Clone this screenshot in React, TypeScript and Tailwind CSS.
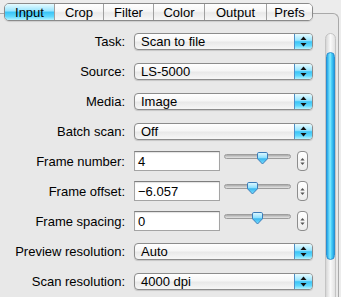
import React from 'react'

const aquaV =
  'bg-[linear-gradient(to_bottom,#e6fbff_0%,#9be6ff_42%,#3cc4f6_52%,#5fd8fd_78%,#b6f4ff_100%)]'
const whiteV =
  'bg-[linear-gradient(to_bottom,#ffffff_0%,#f6f6f6_45%,#e9e9e9_55%,#f7f7f7_100%)]'

const tabs = [
  { name: 'Input', w: 'w-[49px]', on: true },
  { name: 'Crop', w: 'w-[49px]' },
  { name: 'Filter', w: 'w-[50px]' },
  { name: 'Color', w: 'w-[51px]' },
  { name: 'Output', w: 'w-[62px]' },
  { name: 'Prefs', w: 'w-[46px]' },
]

type Row =
  | { label: string; kind: 'select'; value: string }
  | { label: string; kind: 'field'; value: string; thumb: number }

const rows: Row[] = [
  { label: 'Task:', kind: 'select', value: 'Scan to file' },
  { label: 'Source:', kind: 'select', value: 'LS-5000' },
  { label: 'Media:', kind: 'select', value: 'Image' },
  { label: 'Batch scan:', kind: 'select', value: 'Off' },
  { label: 'Frame number:', kind: 'field', value: '4', thumb: 38 },
  { label: 'Frame offset:', kind: 'field', value: '\u22126.057', thumb: 28 },
  { label: 'Frame spacing:', kind: 'field', value: '0', thumb: 33 },
  { label: 'Preview resolution:', kind: 'select', value: 'Auto' },
  { label: 'Scan resolution:', kind: 'select', value: '4000 dpi' },
]

function Arrows({ size = 'sm' }: { size?: 'sm' | 'xs' }) {
  const w = size === 'sm' ? 7 : 5
  const fill = size === 'sm' ? '#111' : '#555'
  return (
    <svg width={w} height={11} viewBox="0 0 7 11">
      <path d="M3.5 0.5 L6.5 4 H0.5 Z" fill={fill} />
      <path d="M3.5 10.5 L6.5 7 H0.5 Z" fill={fill} />
    </svg>
  )
}

function Select({ value }: { value: string }) {
  return (
    <div
      className={`flex h-[17px] w-[179px] overflow-hidden rounded-[4px] border border-[#8c8c8c] shadow-[0_1px_1px_rgba(0,0,0,0.15)] ${whiteV}`}
    >
      <div className="flex flex-1 items-center pl-[6px] leading-none">{value}</div>
      <div
        className={`flex w-[18px] items-center justify-center border-l border-[#4f90c8] ${aquaV}`}
      >
        <Arrows />
      </div>
    </div>
  )
}

function Thumb() {
  return (
    <svg width="11" height="13" viewBox="0 0 11 13">
      <defs>
        <linearGradient id="th" x1="0" y1="0" x2="0" y2="1">
          <stop offset="0" stopColor="#e2f9ff" />
          <stop offset="0.45" stopColor="#8fe0fd" />
          <stop offset="0.55" stopColor="#3ab8f0" />
          <stop offset="1" stopColor="#7ee0ff" />
        </linearGradient>
      </defs>
      <path
        d="M1.8 0.5 H9.2 A1.3 1.3 0 0 1 10.5 1.8 V6.8 L5.5 12 L0.5 6.8 V1.8 A1.3 1.3 0 0 1 1.8 0.5 Z"
        fill="url(#th)"
        stroke="#3d7cb8"
        strokeWidth="1"
      />
    </svg>
  )
}

function FieldRow({ value, thumb }: { value: string; thumb: number }) {
  return (
    <div className="flex items-center">
      <div className="flex h-[20px] w-[86px] items-center border border-[#a4a4a4] border-t-[#7e7e7e] bg-white pl-[3px] leading-none shadow-[inset_0_1px_1px_rgba(0,0,0,0.12)]">
        {value}
      </div>
      <div className="relative ml-[4px] h-[20px] w-[67px]">
        <div className="absolute left-0 right-0 top-[3px] h-[5px] rounded-full border border-[#9d9d9d] bg-[linear-gradient(to_bottom,#a9a9a9,#cfcfcf_60%,#e4e4e4)]" />
        <div className="absolute top-[1px]" style={{ left: thumb - 5.5 }}>
          <Thumb />
        </div>
      </div>
      <div className="ml-[6px] flex h-[20px] w-[11px] items-center justify-center rounded-[4px] border border-[#8d8d8d] bg-[linear-gradient(to_bottom,#ffffff,#ececec)]">
        <Arrows size="xs" />
      </div>
    </div>
  )
}

export default function App() {
  return (
    <div
      className="h-[297px] w-[341px] overflow-hidden bg-[#ececec] pt-[3px] text-[13px] text-black"
      style={{ fontFamily: '"Liberation Sans", Arial, sans-serif' }}
    >
      {/* tab strip */}
      <div className="relative z-10 ml-[4px] flex h-[18px] w-fit overflow-hidden rounded-[5px] border border-[#8a8a8a] shadow-[0_1px_1px_rgba(0,0,0,0.12)]">
        {tabs.map((t, i) => (
          <div
            key={t.name}
            className={`flex items-center justify-center leading-none ${t.w} ${
              i > 0 ? 'border-l border-[#a0a0a0]' : ''
            } ${t.on ? aquaV : whiteV}`}
          >
            {t.name}
          </div>
        ))}
      </div>

      {/* panel */}
      <div className="-mt-[8px] mr-[2px] flex h-[300px] rounded-tr-[6px] border-r border-t border-[#a9a9a9] bg-[#e8e8e8]">
        <div className="flex-1 pt-[12px]">
          {rows.map((r) => (
            <div key={r.label} className="flex h-[30px] items-center">
              <div className="w-[125px] text-right leading-none">{r.label}</div>
              <div className="ml-[9px]">
                {r.kind === 'select' ? (
                  <Select value={r.value} />
                ) : (
                  <FieldRow value={r.value} thumb={r.thumb} />
                )}
              </div>
            </div>
          ))}
        </div>

        {/* scrollbar */}
        <div className="mr-[2px] mt-[19px] flex w-[11px] flex-col overflow-hidden rounded-t-full border border-[#c4c4c4] bg-[linear-gradient(to_right,#d6d6d6,#f9f9f9_50%,#e2e2e2)]">
          <div className="h-[18px] shrink-0" />
          <div className="h-[208px] shrink-0 rounded-full border border-[#2c8fcf] bg-[linear-gradient(to_right,#20a6e8,#86ecff_45%,#52d6fb_60%,#1f9fe2)]" />
        </div>
      </div>
    </div>
  )
}
